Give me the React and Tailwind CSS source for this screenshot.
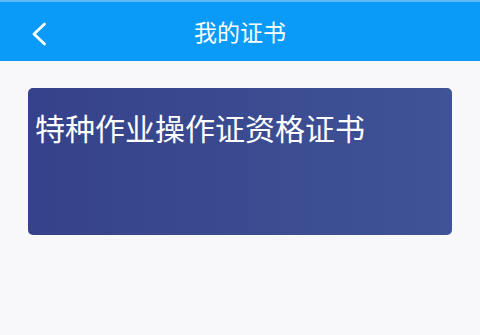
import React from "react";

const certificates = [{ id: 1, name: "特种作业操作证资格证书" }];

const App = () => {
  return (
    <div
      className="min-h-[335px] bg-[#f8f8fa]"
      style={{ fontFamily: '"Noto Sans CJK SC", "Noto Sans", sans-serif' }}
    >
      {/* Header */}
      <div className="relative flex h-[61px] items-center justify-center border-t-2 border-[#5db8fb] bg-[#0a9bf9]">
        <button className="absolute left-[27px] top-[12px] flex h-[40px] w-[24px] items-center justify-center">
          <svg width="16" height="24" viewBox="0 0 16 24" fill="none">
            <path
              d="M13.5 2 L3 12 L13.5 22"
              stroke="white"
              strokeWidth="2.8"
              strokeLinecap="round"
              strokeLinejoin="round"
            />
          </svg>
        </button>
        <h1 className="text-[23px] leading-none text-white">我的证书</h1>
      </div>

      {/* Certificate list */}
      <div className="flex flex-col gap-4 px-[28px] pt-[27px]">
        {certificates.map((cert) => (
          <div
            key={cert.id}
            className="h-[147px] rounded-[5px] bg-linear-to-r from-[#35428b] to-[#405396] pl-[7px] pt-[24px]"
          >
            <p className="text-[30px] leading-none text-white">{cert.name}</p>
          </div>
        ))}
      </div>
    </div>
  );
};

export default App;
